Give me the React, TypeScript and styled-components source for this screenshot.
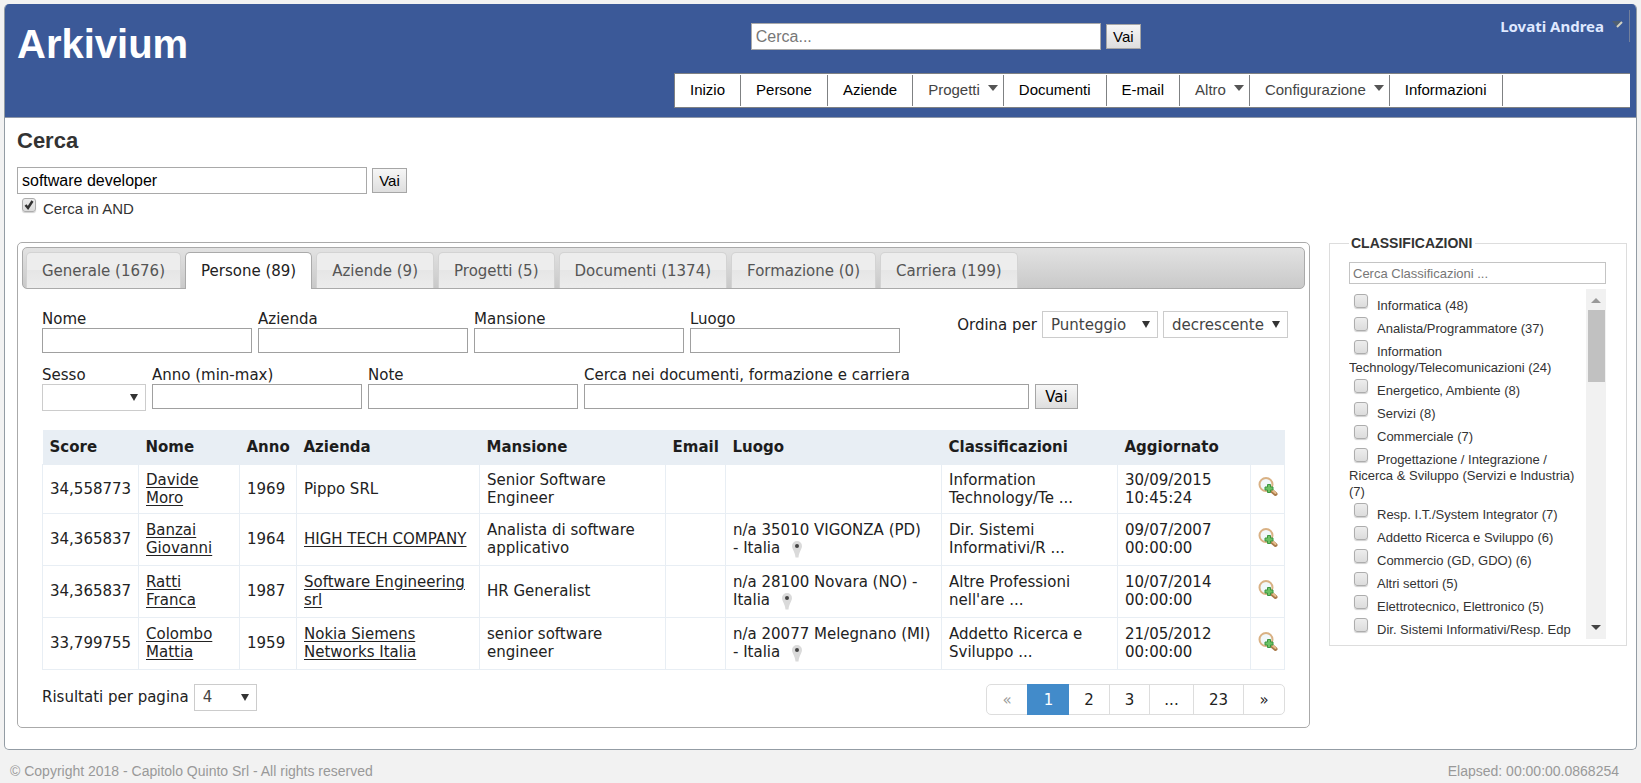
import React from 'react';
import styled, { createGlobalStyle, css } from 'styled-components';

const sans = `"Liberation Sans", Arial, sans-serif`;
const wide = `"DejaVu Sans", Verdana, sans-serif`;

const GlobalStyle = createGlobalStyle`
  *, *::before, *::after { box-sizing: border-box; }
  body {
    margin: 0;
    padding: 4px;
    background: #f2f2f2;
    color: #333;
    font: 15px/18px ${sans};
  }
`;

const Shell = styled.div`
  border: 1px solid #939ca4;
  border-top: 0;
  border-radius: 5px;
  background: #fff;
  overflow: hidden;
`;

const Header = styled.header`
  display: grid;
  grid-template-columns: 3fr auto 2fr;
  grid-template-rows: 63px auto;
  align-items: start;
  height: 114px;
  padding: 6px 6px 0 12px;
  background: #3b5998;
  border-bottom: 1px solid #8e97a8;
`;

const Brand = styled.h1`
  margin: 10px 0 0;
  color: #fff;
  font-size: 40px;
  line-height: 48px;
`;

const SearchForm = styled.form<{ $top: number }>`
  display: flex;
  align-items: center;
  gap: 5px;
  padding-top: ${p => p.$top}px;
`;

const SearchInput = styled.input`
  width: 350px;
  height: 27px;
  padding: 0 4px;
  border: 1px solid #a9a9a9;
  background: #fff;
  color: #000;
  font: 16px ${sans};
  &::placeholder { color: #777; }
`;

const GoButton = styled.button<{ $wide?: boolean }>`
  width: ${p => (p.$wide ? 43 : 35)}px;
  height: 25px;
  padding: 0;
  border: 1px solid #a6a6a6;
  background: linear-gradient(#f6f6f6, #dedede);
  color: #000;
  font: 15px ${p => (p.$wide ? wide : sans)};
`;

const UserMenu = styled.button`
  display: flex;
  justify-self: end;
  align-items: center;
  gap: 8px;
  height: 32px;
  padding: 0 5px 0 0;
  border: 0;
  border-right: 1px solid #73809c;
  background: none;
  color: #dfe8ff;
  font: bold 15px "Noto Sans", sans-serif;
`;

const NavBar = styled.nav`
  grid-column: 1 / -1;
  display: flex;
  justify-self: end;
  width: 956px;
  height: 35px;
  padding: 1px 0;
  border: 1px solid #7f8183;
  border-right: 0;
  background: #fff;
`;

const NavLink = styled.a<{ $menu?: boolean }>`
  display: flex;
  align-items: center;
  gap: 8px;
  padding: 0 ${p => (p.$menu ? 5 : 15)}px 1px 15px;
  border-right: 1px solid #7f8183;
  color: ${p => (p.$menu ? '#444' : '#000')};
  text-decoration: none;
  white-space: nowrap;
  ${p => p.$menu && css`
    &::after {
      content: '';
      margin-top: -4px;
      border: 5px solid transparent;
      border-top: 6px solid #555;
      border-bottom: 0;
    }
  `}
`;

const Content = styled.main`
  padding: 11px 9px 21px 12px;
`;

const PageTitle = styled.h2`
  margin: 0;
  font-size: 22px;
  line-height: 24px;
`;

const CheckBox = styled.input`
  appearance: none;
  width: 14px;
  height: 14px;
  margin: 0;
  border: 1px solid #adadad;
  border-radius: 3px;
  background: linear-gradient(#ededed, #dcdcdc);
  box-shadow: 0 1px 1px #d0d0d0;
`;

const AndOption = styled.label`
  display: flex;
  gap: 7px;
  width: max-content;
  padding: 4px 0 0 5px;
`;

const AndBox = styled.span`
  display: grid;
  align-self: start;
  > * { grid-area: 1 / 1; }
`;

const AndText = styled.span`
  padding-top: 1px;
  line-height: 20px;
`;

const Columns = styled.div`
  display: flex;
  align-items: flex-start;
  gap: 19px;
  margin-top: 23px;
`;

const Results = styled.section`
  flex: 1;
  min-width: 0;
  padding: 4px 4px 12px;
  border: 1px solid #aaa;
  border-radius: 5px;
  color: #222;
  font-family: ${wide};
`;

const TabBar = styled.div`
  display: flex;
  gap: 4px;
  height: 42px;
  padding: 4px 3px 0;
  border: 1px solid #aaa;
  border-radius: 5px;
  background: linear-gradient(#e2e2e2, #c9c9c9);
`;

const Tab = styled.button<{ $active?: boolean }>`
  height: ${p => (p.$active ? 37 : 36)}px;
  padding: 0 15px;
  border: 1px solid ${p => (p.$active ? '#aaa' : '#d3d3d3')};
  border-bottom: 0;
  border-radius: 5px 5px 0 0;
  background: ${p => (p.$active ? '#fff' : 'linear-gradient(#ededed 50%, #e6e6e6 50%, #ececec)')};
  color: ${p => (p.$active ? '#212121' : '#555')};
  font: 15px ${wide};
  white-space: nowrap;
`;

const Panel = styled.div`
  padding: 21px 17px 0 20px;
`;

const FilterRow = styled.div`
  display: flex;
  align-items: flex-end;
  gap: 6px;
  min-height: 43px;
  margin-bottom: 13px;
`;

const Field = styled.label<{ $w: number }>`
  display: flex;
  flex-direction: column;
  flex: 0 1 ${p => p.$w}px;
  white-space: nowrap;
`;

const TextInput = styled.input`
  width: 100%;
  height: 25px;
  padding: 0 4px;
  border: 1px solid #a0a0a0;
  background: #fff;
  font: 15px ${wide};
`;

const Picker = styled.span<{ $w: number }>`
  display: inline-grid;
  width: ${p => p.$w}px;
  > select { grid-area: 1 / 1; }
  &::after {
    content: '';
    grid-area: 1 / 1;
    place-self: center end;
    margin-right: 8px;
    border: 4px solid transparent;
    border-top: 7px solid #333;
    border-bottom: 0;
    pointer-events: none;
  }
`;

const Select = styled.select`
  appearance: none;
  width: 100%;
  height: 27px;
  padding: 0 8px;
  border: 1px solid #ccc;
  border-radius: 0;
  background: #fff;
  color: #444;
  font: 15px ${wide};
`;

const SessoField = styled(Field)`
  margin-bottom: -2px;
`;

const SortGroup = styled.div`
  display: flex;
  align-items: center;
  align-self: flex-start;
  gap: 5px;
  margin: 1px 0 0 auto;
  white-space: nowrap;
`;

const InlineLabel = styled.label`
  display: flex;
  align-items: center;
  gap: 5px;
`;

const Table = styled.table`
  width: calc(100% - 8px);
  margin-top: 21px;
  table-layout: fixed;
  border-collapse: collapse;
  line-height: 18px;
`;

const HeadCell = styled.th`
  height: 34px;
  padding: 0 7px;
  background: #e8eef4;
  color: #1d1d1d;
  text-align: left;
  white-space: nowrap;
`;

const Cell = styled.td`
  padding: 0 7px;
  border: 1px solid #e8eef4;
`;

const BodyRow = styled.tr<{ $tall: boolean }>`
  height: ${p => (p.$tall ? 52 : 49)}px;
`;

const RecordLink = styled.a`
  color: #222;
  text-decoration: underline;
  text-underline-offset: 2px;
`;

const Together = styled.span`
  white-space: nowrap;
`;

const IconButton = styled.button`
  display: block;
  padding: 0;
  border: 0;
  background: none;
`;

const PinIcon = styled.svg`
  margin-left: 6px;
  vertical-align: -5px;
`;

const TableFooter = styled.div`
  display: flex;
  justify-content: space-between;
  align-items: flex-start;
  margin: 14px 3px 0 0;
`;

const Pager = styled.nav`
  display: flex;
  height: 31px;
  border: 1px solid #ddd;
  border-radius: 5px;
`;

const PageLink = styled.a<{ $w: number; $active?: boolean; $muted?: boolean }>`
  width: ${p => p.$w}px;
  border-left: 1px solid #ddd;
  color: ${p => (p.$active ? '#fff' : p.$muted ? '#999' : '#222')};
  font-size: 15px;
  line-height: 30px;
  text-align: center;
  text-decoration: none;
  &:first-child { border-left: 0; }
  ${p => p.$active && css`
    margin: -1px 0;
    border-color: #428bca;
    background: #428bca;
    line-height: 32px;
    & + a { border-left: 0; }
  `}
`;

const Facets = styled.fieldset`
  width: 298px;
  flex: none;
  margin: -7px 0 0;
  padding: 5px 20px 6px 19px;
  border: 1px solid #ddd;
  font-size: 13px;
`;

const Legend = styled.legend`
  padding: 0 3px 0 2px;
  font-size: 14px;
  font-weight: bold;
  line-height: 16px;
`;

const FacetSearch = styled.input`
  display: block;
  width: 100%;
  height: 22px;
  margin-top: 6px;
  padding: 0 3px;
  border: 1px solid #c4c4c4;
  font: 13px ${sans};
  &::placeholder { color: #777; }
`;

const FacetScroller = styled.div`
  display: flex;
  height: 350px;
  margin-top: 5px;
`;

const FacetList = styled.ul`
  flex: 1;
  min-width: 0;
  margin: 0;
  padding: 2px 0 0;
  overflow: hidden;
  list-style: none;
  line-height: 16px;
`;

const FacetItem = styled.li`
  padding-top: 7px;
  margin-right: -3px;
`;

const FacetBox = styled(CheckBox)`
  margin: -6px 9px 0 5px;
  vertical-align: 2px;
`;

const ScrollTrack = styled.div`
  display: flex;
  flex-direction: column;
  align-items: center;
  width: 20px;
  padding: 9px 1px;
  background: #f1f1f1;
`;

const ScrollArrow = styled.span<{ $down?: boolean }>`
  border: 5px solid transparent;
  ${p => p.$down
    ? css`border-top-color: #444; border-bottom: 0; margin-top: auto;`
    : css`border-bottom-color: #999; border-top: 0;`}
`;

const ScrollThumb = styled.span`
  width: 17px;
  height: 72px;
  margin-top: 7px;
  background: #c1c1c1;
`;

const PageFooter = styled.footer`
  display: flex;
  justify-content: space-between;
  padding: 12px 18px 0 6px;
  color: #999;
  font-size: 14px;
`;

const NAV: { label: string; menu?: boolean }[] = [
  { label: 'Inizio' },
  { label: 'Persone' },
  { label: 'Aziende' },
  { label: 'Progetti', menu: true },
  { label: 'Documenti' },
  { label: 'E-mail' },
  { label: 'Altro', menu: true },
  { label: 'Configurazione', menu: true },
  { label: 'Informazioni' },
];

const TABS = [
  'Generale (1676)', 'Persone (89)', 'Aziende (9)', 'Progetti (5)',
  'Documenti (1374)', 'Formazione (0)', 'Carriera (199)',
];

const COLUMNS: [string, number][] = [
  ['Score', 96], ['Nome', 101], ['Anno', 57], ['Azienda', 183], ['Mansione', 186],
  ['Email', 60], ['Luogo', 216], ['Classificazioni', 176], ['Aggiornato', 133], ['', 34],
];

interface Person {
  score: string; nome: string; anno: string; azienda: string; linked: boolean;
  mansione: string; luogo: string; paese: string; classi: string; data: string; ora: string;
}

const PEOPLE: Person[] = [
  { score: '34,558773', nome: 'Davide Moro', anno: '1969', azienda: 'Pippo SRL', linked: false, mansione: 'Senior Software Engineer', luogo: '', paese: '', classi: 'Information Technology/Te ...', data: '30/09/2015', ora: '10:45:24' },
  { score: '34,365837', nome: 'Banzai Giovanni', anno: '1964', azienda: 'HIGH TECH COMPANY', linked: true, mansione: 'Analista di software applicativo', luogo: 'n/a 35010 VIGONZA (PD)', paese: '- Italia', classi: 'Dir. Sistemi Informativi/R ...', data: '09/07/2007', ora: '00:00:00' },
  { score: '34,365837', nome: 'Ratti Franca', anno: '1987', azienda: 'Software Engineering srl', linked: true, mansione: 'HR Generalist', luogo: 'n/a 28100 Novara (NO) -', paese: 'Italia', classi: "Altre Professioni nell'are ...", data: '10/07/2014', ora: '00:00:00' },
  { score: '33,799755', nome: 'Colombo Mattia', anno: '1959', azienda: 'Nokia Siemens Networks Italia', linked: true, mansione: 'senior software engineer', luogo: 'n/a 20077 Melegnano (MI)', paese: '- Italia', classi: 'Addetto Ricerca e Sviluppo ...', data: '21/05/2012', ora: '00:00:00' },
];

const FACETS = [
  'Informatica (48)',
  'Analista/Programmatore (37)',
  'Information Technology/Telecomunicazioni (24)',
  'Energetico, Ambiente (8)',
  'Servizi (8)',
  'Commerciale (7)',
  'Progettazione / Integrazione / Ricerca & Sviluppo (Servizi e Industria) (7)',
  'Resp. I.T./System Integrator (7)',
  'Addetto Ricerca e Sviluppo (6)',
  'Commercio (GD, GDO) (6)',
  'Altri settori (5)',
  'Elettrotecnico, Elettronico (5)',
  'Dir. Sistemi Informativi/Resp. Edp',
];

const Magnifier = () => (
  <svg width="20" height="20" viewBox="0 0 20 20" aria-hidden="true">
    <path d="M14 14l3.500 3" stroke="#a97a4a" strokeWidth="4" strokeLinecap="round" />
    <path d="M14.500 13.500l3 2.500" stroke="#e6bd8c" strokeWidth="2" strokeLinecap="round" />
    <circle cx="8" cy="7.500" r="6.500" fill="#f1f7fa" stroke="#d9b184" strokeWidth="2" />
    <path d="M9.500 7.500h3v2.500h2.500v3h-2.500v2.500h-3v-2.500h-2.500v-3h2.500z" fill="#6cc265" stroke="#3b9540" />
  </svg>
);

const Pin = () => (
  <PinIcon width="12" height="18" viewBox="0 0 12 18" aria-hidden="true">
    <path d="M6 1a5 5 0 0 0-5 5c0 3 3 6 3.500 11.500h3C8 12 11 9 11 6a5 5 0 0 0-5-5z" fill="#dadada" />
    <circle cx="6" cy="6" r="2" fill="#444" />
  </PinIcon>
);

export default function App() {
  return (
    <>
      <GlobalStyle />
      <Shell>
        <Header>
          <Brand>Arkivium</Brand>
          <SearchForm $top={13}>
            <SearchInput aria-label="Cerca" placeholder="Cerca..." />
            <GoButton type="button">Vai</GoButton>
          </SearchForm>
          <UserMenu type="button">
            Lovati Andrea
            <svg width="12" height="10" viewBox="0 0 12 10" aria-hidden="true">
              <path d="M0 0h9L5 6z" fill="#4f5f70" />
              <path d="M5 6l5-5" stroke="#d3d2c2" strokeWidth="2" />
            </svg>
          </UserMenu>
          <NavBar>
            {NAV.map(item => (
              <NavLink key={item.label} href="#" $menu={item.menu}>{item.label}</NavLink>
            ))}
          </NavBar>
        </Header>

        <Content>
          <PageTitle>Cerca</PageTitle>
          <SearchForm $top={14}>
            <SearchInput aria-label="Testo da cercare" defaultValue="software developer" />
            <GoButton type="button">Vai</GoButton>
          </SearchForm>
          <AndOption>
            <AndBox>
              <CheckBox type="checkbox" defaultChecked />
              <svg width="14" height="14" viewBox="0 0 14 14" aria-hidden="true">
                <path d="M3.500 7l2.500 3 4.500-7" fill="none" stroke="#333" strokeWidth="2.500" />
              </svg>
            </AndBox>
            <AndText>Cerca in AND</AndText>
          </AndOption>

          <Columns>
            <Results>
              <TabBar role="tablist">
                {TABS.map((t, i) => (
                  <Tab key={t} type="button" role="tab" aria-selected={i === 1} $active={i === 1}>{t}</Tab>
                ))}
              </TabBar>
              <Panel>
                <FilterRow>
                  {['Nome', 'Azienda', 'Mansione', 'Luogo'].map(name => (
                    <Field key={name} $w={210}>{name}<TextInput /></Field>
                  ))}
                  <SortGroup>
                    <InlineLabel>
                      Ordina per
                      <Picker $w={116}><Select><option>Punteggio</option></Select></Picker>
                    </InlineLabel>
                    <Picker $w={125}><Select aria-label="Direzione"><option>decrescente</option></Select></Picker>
                  </SortGroup>
                </FilterRow>
                <FilterRow>
                  <SessoField $w={104}>
                    Sesso
                    <Picker $w={104}><Select><option></option></Select></Picker>
                  </SessoField>
                  <Field $w={210}>Anno (min-max)<TextInput /></Field>
                  <Field $w={210}>Note<TextInput /></Field>
                  <Field $w={445}>Cerca nei documenti, formazione e carriera<TextInput /></Field>
                  <GoButton type="button" $wide>Vai</GoButton>
                </FilterRow>

                <Table>
                  <colgroup>
                    {COLUMNS.map(([name, w]) => <col key={name} width={w} />)}
                  </colgroup>
                  <thead>
                    <tr>{COLUMNS.map(([name]) => <HeadCell key={name}>{name}</HeadCell>)}</tr>
                  </thead>
                  <tbody>
                    {PEOPLE.map(p => (
                      <BodyRow key={p.nome} $tall={p.luogo !== ''}>
                        <Cell>{p.score}</Cell>
                        <Cell><RecordLink href="#">{p.nome}</RecordLink></Cell>
                        <Cell>{p.anno}</Cell>
                        <Cell>{p.linked ? <RecordLink href="#">{p.azienda}</RecordLink> : p.azienda}</Cell>
                        <Cell>{p.mansione}</Cell>
                        <Cell />
                        <Cell>{p.luogo && <>{p.luogo} <Together>{p.paese} <Pin /></Together></>}</Cell>
                        <Cell>{p.classi}</Cell>
                        <Cell>{p.data} {p.ora}</Cell>
                        <Cell><IconButton type="button" aria-label="Dettagli"><Magnifier /></IconButton></Cell>
                      </BodyRow>
                    ))}
                  </tbody>
                </Table>

                <TableFooter>
                  <InlineLabel>
                    Risultati per pagina
                    <Picker $w={63}><Select><option>4</option></Select></Picker>
                  </InlineLabel>
                  <Pager aria-label="Pagine">
                    <PageLink href="#" $w={40} $muted>«</PageLink>
                    <PageLink href="#" $w={42} $active>1</PageLink>
                    <PageLink href="#" $w={40}>2</PageLink>
                    <PageLink href="#" $w={40}>3</PageLink>
                    <PageLink href="#" $w={44}>...</PageLink>
                    <PageLink href="#" $w={50}>23</PageLink>
                    <PageLink href="#" $w={41}>»</PageLink>
                  </Pager>
                </TableFooter>
              </Panel>
            </Results>

            <Facets>
              <Legend>CLASSIFICAZIONI</Legend>
              <FacetSearch aria-label="Cerca Classificazioni" placeholder="Cerca Classificazioni ..." />
              <FacetScroller>
                <FacetList>
                  {FACETS.map(f => (
                    <FacetItem key={f}>
                      <label><FacetBox type="checkbox" />{f}</label>
                    </FacetItem>
                  ))}
                </FacetList>
                <ScrollTrack>
                  <ScrollArrow />
                  <ScrollThumb />
                  <ScrollArrow $down />
                </ScrollTrack>
              </FacetScroller>
            </Facets>
          </Columns>
        </Content>
      </Shell>
      <PageFooter>
        <span>© Copyright 2018 - Capitolo Quinto Srl - All rights reserved</span>
        <span>Elapsed: 00:00:00.0868254</span>
      </PageFooter>
    </>
  );
}
